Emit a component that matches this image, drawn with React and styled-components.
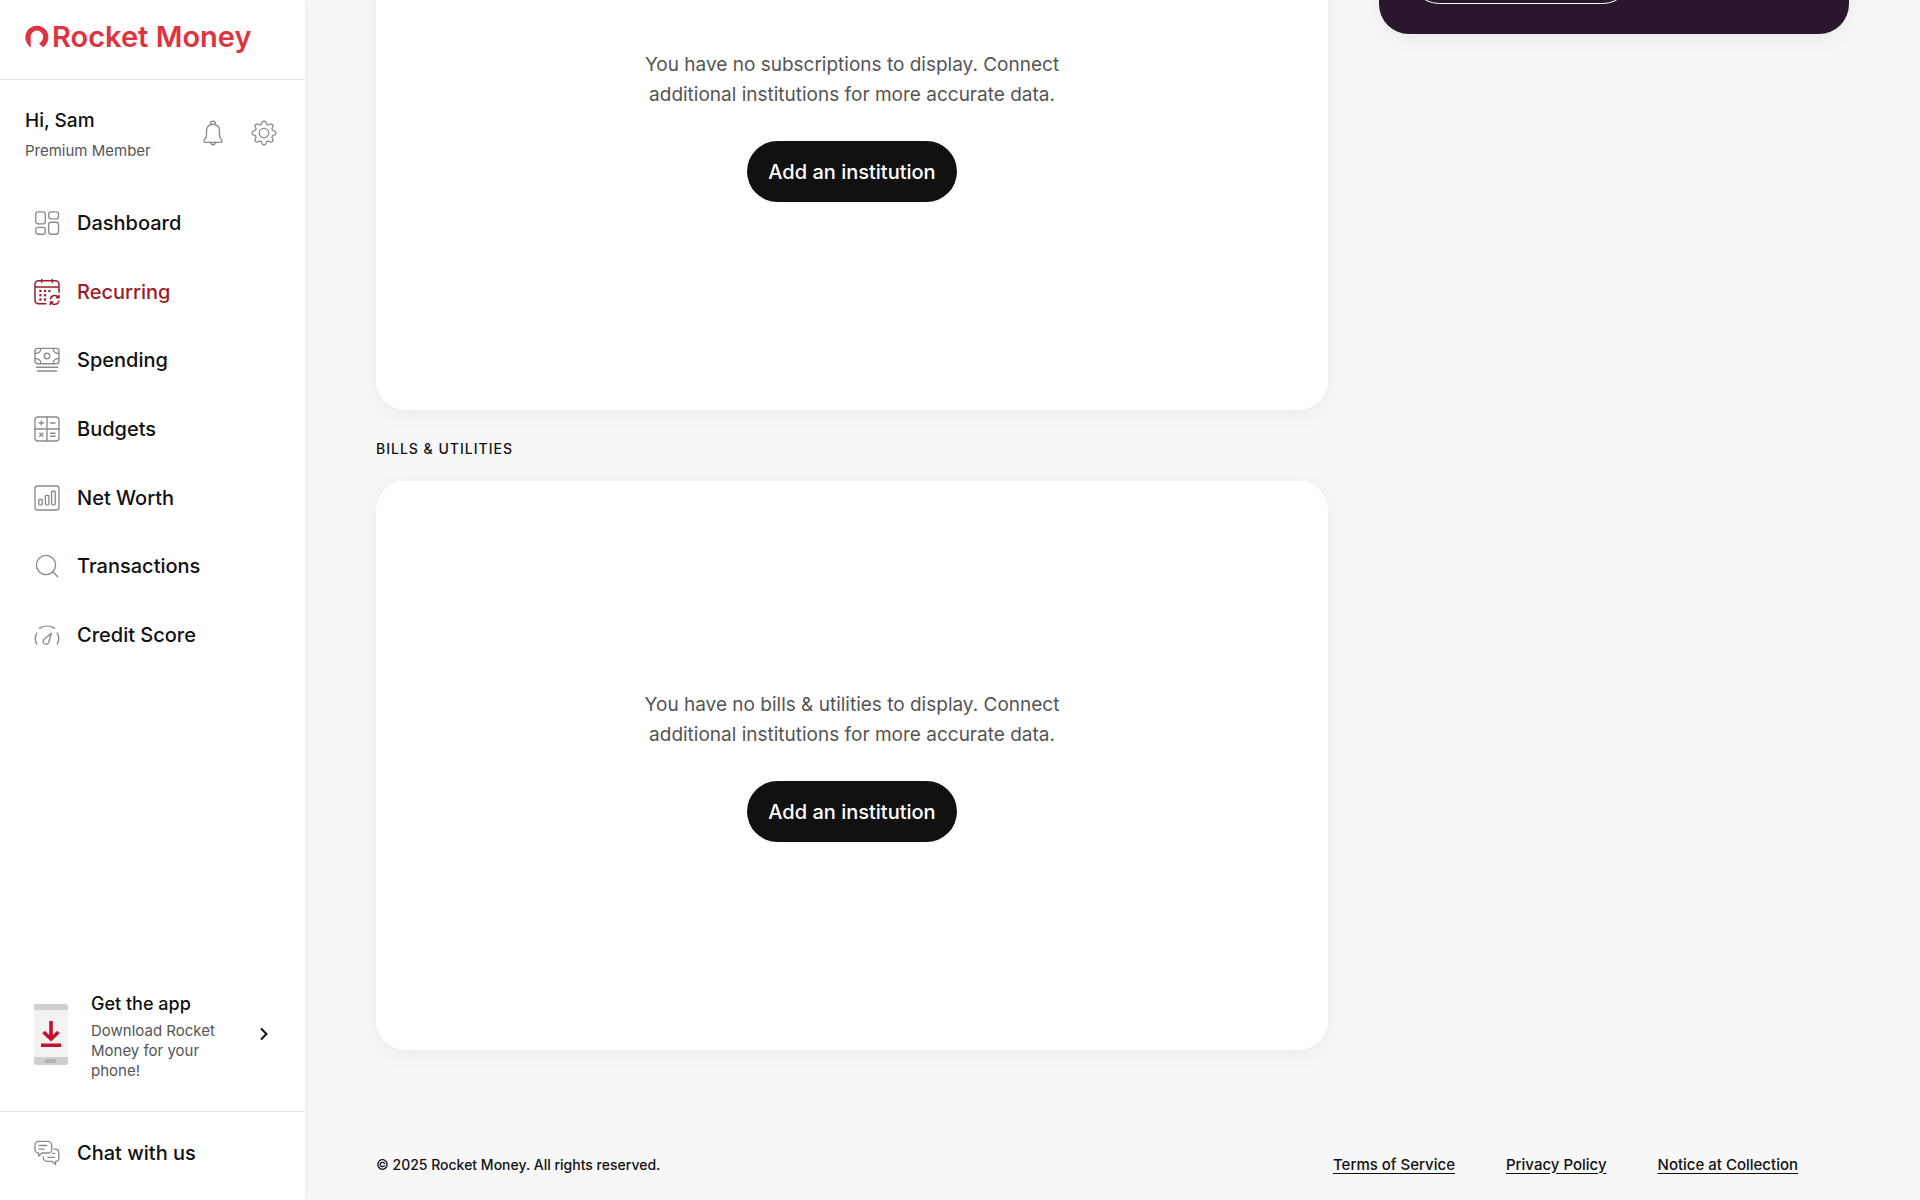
import React from 'react';
import styled, { createGlobalStyle } from 'styled-components';

const GlobalStyle = createGlobalStyle`
  * {
    box-sizing: border-box;
  }

  body {
    margin: 0;
    background: #f7f7f7;
    color: #111;
    font-family: Inter, 'Liberation Sans', sans-serif;
    font-size: 20px;
  }
`;

const Page = styled.div`
  display: flex;
  height: 100vh;
  overflow: hidden;
`;

const Sidebar = styled.aside`
  display: flex;
  flex-direction: column;
  flex: 0 0 305px;
  background: #fff;
  box-shadow: 0 0 12px rgba(0, 0, 0, 0.06);
`;

const Brand = styled.a`
  display: flex;
  align-items: center;
  gap: 3px;
  height: 80px;
  padding: 0 25px 6px;
  border-bottom: 1px solid #e2e2e2;
  color: #de3341;
  font-size: 29px;
  font-weight: 600;
  text-decoration: none;
  white-space: nowrap;
`;

const Profile = styled.div`
  display: flex;
  align-items: center;
  justify-content: space-between;
  height: 109px;
  padding: 3px 28px 0 25px;
`;

const Greeting = styled.div`
  font-size: 19px;
  font-weight: 500;
  line-height: 30px;
`;

const Membership = styled.div`
  color: #555;
  font-size: 15px;
  line-height: 30px;
`;

const ProfileActions = styled.div`
  display: flex;
  gap: 25px;
  padding-bottom: 6px;
`;

const IconButton = styled.button`
  display: flex;
  padding: 0;
  border: none;
  background: none;
  color: #8c8c8c;
  cursor: pointer;
`;

const Nav = styled.nav`
  display: flex;
  flex-direction: column;
  height: 480px;
`;

const NavLink = styled.a`
  display: flex;
  flex: 1;
  align-items: center;
  gap: 17px;
  padding: 0 34px;
  color: ${props => props.$active ? '#9c1c2b' : '#111'};
  font-size: 20px;
  font-weight: 500;
  text-decoration: none;

  svg {
    color: ${props => props.$active ? '#9c1c2b' : '#8c8c8c'};
  }
`;

const SidebarBottom = styled.div`
  margin-top: auto;
`;

const AppPromo = styled.a`
  display: grid;
  grid-template-columns: 34px 1fr 12px;
  gap: 23px;
  align-items: center;
  padding: 0 35px 30px 34px;
  color: #111;
  text-decoration: none;
`;

const PromoTitle = styled.div`
  font-size: 18px;
  font-weight: 500;
  line-height: 34px;
`;

const PromoText = styled.div`
  max-width: 130px;
  color: #555;
  font-size: 15px;
  line-height: 20px;
`;

const ChatRow = styled.div`
  display: flex;
  height: 89px;
  padding-bottom: 6px;
  border-top: 1px solid #e2e2e2;
`;

// Opened at the end of the page, so the content hangs from the bottom edge
const Main = styled.main`
  display: flex;
  flex: 1;
  flex-direction: column;
  justify-content: flex-end;
  min-width: 0;
  padding: 0 71px;
`;

const Columns = styled.div`
  display: grid;
  flex: none;
  grid-template-columns: minmax(0, 1fr) 470px;
  gap: 51px;
  align-items: start;
`;

const Card = styled.section`
  display: flex;
  flex-direction: column;
  align-items: center;
  padding: 209px 24px 208px;
  border-radius: 30px;
  background: #fff;
  box-shadow: 0 5px 20px rgba(0, 0, 0, 0.05);
`;

const EmptyText = styled.p`
  max-width: 440px;
  margin: 0 0 31px;
  color: #555;
  font-size: 19px;
  line-height: 30px;
  text-align: center;
`;

const AddButton = styled.button`
  height: 61px;
  padding: 0 21px;
  border: none;
  border-radius: 31px;
  background: #111;
  color: #fff;
  font-family: inherit;
  font-size: 20px;
  font-weight: 500;
  cursor: pointer;
`;

const SectionTitle = styled.h2`
  margin: 0;
  padding: 24px 0 17px;
  font-size: 14px;
  font-weight: 500;
  letter-spacing: 1px;
  line-height: 30px;
  text-transform: uppercase;
`;

const UpcomingCard = styled.section`
  display: flex;
  align-items: flex-end;
  height: 193px;
  padding: 30px;
  border-radius: 30px;
  background: #2a172d;
  box-shadow: 0 5px 20px rgba(0, 0, 0, 0.06);
`;

const OutlineButton = styled.button`
  width: 224px;
  height: 61px;
  border: 1px solid #fff;
  border-radius: 31px;
  background: transparent;
  cursor: pointer;
`;

const Footer = styled.footer`
  display: flex;
  flex: none;
  align-items: center;
  justify-content: space-between;
  height: 150px;
  padding: 78px 51px 0 0;
  font-weight: 500;
`;

const Copyright = styled.span`
  font-size: 14px;
`;

const FooterLinks = styled.div`
  display: flex;
  gap: 51px;
  font-size: 15px;

  a {
    color: inherit;
    text-underline-offset: 3px;
  }
`;

const Icon = ({ children }) => (
  <svg
    width="26"
    height="26"
    viewBox="0 0 26 26"
    fill="none"
    stroke="currentColor"
    strokeWidth="1.35"
    strokeLinecap="round"
    strokeLinejoin="round"
    aria-hidden="true"
  >
    {children}
  </svg>
);

const LogoMark = () => (
  <svg width="24" height="23" viewBox="0 0 24 23" fill="currentColor" aria-hidden="true">
    <path d="M5.800 22.300C2.600 20.200.4 16.400.4 12.200A11.500 11.500 0 0 1 23.400 12.200c0 4.200-2.200 8-5.400 10.100l-4-4c2.500-1.100 4.100-3.400 4.100-6.500a6.200 6.200 0 0 0-12.400 0z" />
  </svg>
);

const BellIcon = () => (
  <Icon>
    <path d="M10.600 4.100V3.500a2.400 2.400 0 0 1 4.800 0v.6" />
    <path d="M13 4.200c-3.800 0-6.500 2.800-6.500 6.600v4.400c0 2-.6 3.100-1.900 4.300-1.400 1.300-.8 2.900.9 2.900h15c1.700 0 2.300-1.600.9-2.900-1.300-1.200-1.900-2.300-1.900-4.300v-4.400c0-3.800-2.700-6.600-6.500-6.600z" />
    <path d="M10.600 22.500c.3 1.400 1.200 2.200 2.400 2.200s2.100-.8 2.400-2.200" />
  </Icon>
);

// Eight soft teeth around the hub
const gearPath = Array.from({ length: 96 }, (_, i) => {
  const angle = (i / 96) * Math.PI * 2;
  const radius = 10.4 + 1.6 * Math.tanh(1.6 * Math.cos(angle * 8));
  const x = 13 + radius * Math.cos(angle);
  const y = 13 + radius * Math.sin(angle);
  return `${i ? 'L' : 'M'}${x.toFixed(2)} ${y.toFixed(2)}`;
}).join('') + 'Z';

const GearIcon = () => (
  <Icon>
    <path d={gearPath} />
    <circle cx="13" cy="13" r="4.700" />
  </Icon>
);

const DashboardIcon = () => (
  <Icon>
    <rect x="1.700" y="1.800" width="9.600" height="12" rx="2.400" />
    <rect x="14.700" y="1.800" width="9.800" height="7" rx="2.400" />
    <rect x="1.700" y="17.400" width="9.600" height="6.800" rx="2.400" />
    <rect x="14.700" y="12.200" width="9.800" height="12" rx="2.400" />
  </Icon>
);

const RecurringIcon = () => (
  <Icon>
    <path d="M11.800 24.800H4.500A3.500 3.500 0 0 1 1 21.300V5.200a3.500 3.500 0 0 1 3.500-3.500h17A3.500 3.500 0 0 1 25 5.200v8M1 8h24M7.700.6v2.600M18.300.6v2.600" strokeWidth="1.500" />
    <path d="M6.400 12h.01M11 12h.01M15.400 12h.01M6.400 16.300h.01M11 16.300h.01M6.400 20.600h.01M11 20.600h.01" strokeWidth="2.500" />
    <path d="M16.500 19.800a4.400 4.400 0 0 1 7.900-1.400M25 16.300v2.500h-2.500M24.900 22.100a4.400 4.400 0 0 1-7.900 1.400M16.400 25.500V23h2.500" strokeWidth="1.500" />
  </Icon>
);

const SpendingIcon = () => (
  <Icon>
    <rect x="1" y="1.300" width="24" height="15.400" rx="2.600" />
    <circle cx="13" cy="9" r="2.800" />
    <path d="M6.800 1.500c0 3-2.300 5-5.500 5M19.200 1.500c0 3 2.300 5 5.500 5M6.800 16.500c0-3-2.300-5-5.500-5M19.200 16.500c0-3 2.300-5 5.500-5M2.500 20.200h21M3.500 24h19" />
  </Icon>
);

const BudgetsIcon = () => (
  <Icon>
    <rect x="1" y="1" width="24" height="24" rx="3" />
    <path d="M13 1v24M1 13h24M5.200 7h4.200M7.300 4.900v4.200M16.500 7h4.600M5.700 17.100l3.200 3.200M8.900 17.100l-3.200 3.200M16.500 17.200h4.600M16.500 20.200h4.600" />
  </Icon>
);

const NetWorthIcon = () => (
  <Icon>
    <rect x="1" y="1" width="24" height="24" rx="2.500" />
    <rect x="4.800" y="14.500" width="3.400" height="5.400" rx=".8" />
    <rect x="11.400" y="10.300" width="3.400" height="9.600" rx=".8" />
    <rect x="17.600" y="6.200" width="3.600" height="13.700" rx=".8" />
  </Icon>
);

const SearchIcon = () => (
  <Icon>
    <circle cx="12" cy="12" r="9.600" />
    <path d="M18.800 18.800l4.900 4.900" />
  </Icon>
);

const ScoreIcon = () => (
  <Icon>
    <path d="M5.400 6.400a13.500 13.500 0 0 1 15.200 0M2.800 11.200a11 11 0 0 0 0 11M23.200 11.200a11 11 0 0 1 0 11" />
    <path d="M17.300 11.200l-6.600 5.500c-1.600 1.400-1.800 3.400-.7 4.700 1.300 1.400 3.700 1.200 4.700-.9z" />
  </Icon>
);

const ChatIcon = () => (
  <Icon>
    <path d="M4.600 13A3.600 3.600 0 0 1 1 9.400V4.900a3.600 3.600 0 0 1 3.600-3.600h9.500a3.600 3.600 0 0 1 3.600 3.600v4.500a3.600 3.600 0 0 1-3.600 3.600H8l-3.200 3zM5 5.500h7.800M5 9.100h5" />
    <path d="M20 9.100h1.400a3.400 3.400 0 0 1 3.400 3.400v5.400a3.400 3.400 0 0 1-3.200 3.400v3.200l-3.800-3.200H13a3.600 3.600 0 0 1-3.600-3.600v-1M18.400 13.300h2.200M14 17.300h6.600" />
  </Icon>
);

const PhoneIcon = () => (
  <svg width="34" height="61" viewBox="0 0 34 61" aria-hidden="true">
    <rect width="34" height="61" rx="2.500" fill="#cfcfcf" />
    <path fill="#f2f2f2" d="M0 6h34v47H0z" />
    <path fill="#b3b3b3" d="M11 55h11v4H11z" />
    <path fill="none" stroke="#c51230" strokeWidth="3.600" d="M17 17v18M9.500 28l7.500 7 7.500-7M7 41.200h20" />
  </svg>
);

const ChevronIcon = () => (
  <svg width="12" height="14" viewBox="0 0 12 14" fill="none" stroke="#111" strokeWidth="2" aria-hidden="true">
    <path d="M3 1.500L8.500 7 3 12.500" />
  </svg>
);

const navItems = [
  { label: 'Dashboard', icon: DashboardIcon },
  { label: 'Recurring', icon: RecurringIcon, active: true },
  { label: 'Spending', icon: SpendingIcon },
  { label: 'Budgets', icon: BudgetsIcon },
  { label: 'Net Worth', icon: NetWorthIcon },
  { label: 'Transactions', icon: SearchIcon },
  { label: 'Credit Score', icon: ScoreIcon }
];

const EmptyCard = ({ kind }) => (
  <Card>
    <EmptyText>
      {`You have no ${kind} to display. Connect additional institutions for more accurate data.`}
    </EmptyText>
    <AddButton type="button">Add an institution</AddButton>
  </Card>
);

const App = () => (
  <>
    <GlobalStyle />
    <Page>
      <Sidebar>
        <Brand href="#">
          <LogoMark />
          Rocket Money
        </Brand>

        <Profile>
          <div>
            <Greeting>Hi, Sam</Greeting>
            <Membership>Premium Member</Membership>
          </div>
          <ProfileActions>
            <IconButton type="button" aria-label="Notifications">
              <BellIcon />
            </IconButton>
            <IconButton type="button" aria-label="Settings">
              <GearIcon />
            </IconButton>
          </ProfileActions>
        </Profile>

        <Nav>
          {navItems.map(({ label, icon: ItemIcon, active }) => (
            <NavLink key={label} href="#" $active={active}>
              <ItemIcon />
              {label}
            </NavLink>
          ))}
        </Nav>

        <SidebarBottom>
          <AppPromo href="#">
            <PhoneIcon />
            <div>
              <PromoTitle>Get the app</PromoTitle>
              <PromoText>Download Rocket Money for your phone!</PromoText>
            </div>
            <ChevronIcon />
          </AppPromo>
          <ChatRow>
            <NavLink href="#">
              <ChatIcon />
              Chat with us
            </NavLink>
          </ChatRow>
        </SidebarBottom>
      </Sidebar>

      <Main>
        <Columns>
          <div>
            <EmptyCard kind="subscriptions" />
            <SectionTitle>Bills &amp; Utilities</SectionTitle>
            <EmptyCard kind="bills & utilities" />
          </div>
          <UpcomingCard>
            <OutlineButton type="button" aria-label="View all" />
          </UpcomingCard>
        </Columns>

        <Footer>
          <Copyright>© 2025 Rocket Money. All rights reserved.</Copyright>
          <FooterLinks>
            <a href="#">Terms of Service</a>
            <a href="#">Privacy Policy</a>
            <a href="#">Notice at Collection</a>
          </FooterLinks>
        </Footer>
      </Main>
    </Page>
  </>
);

export default App;
